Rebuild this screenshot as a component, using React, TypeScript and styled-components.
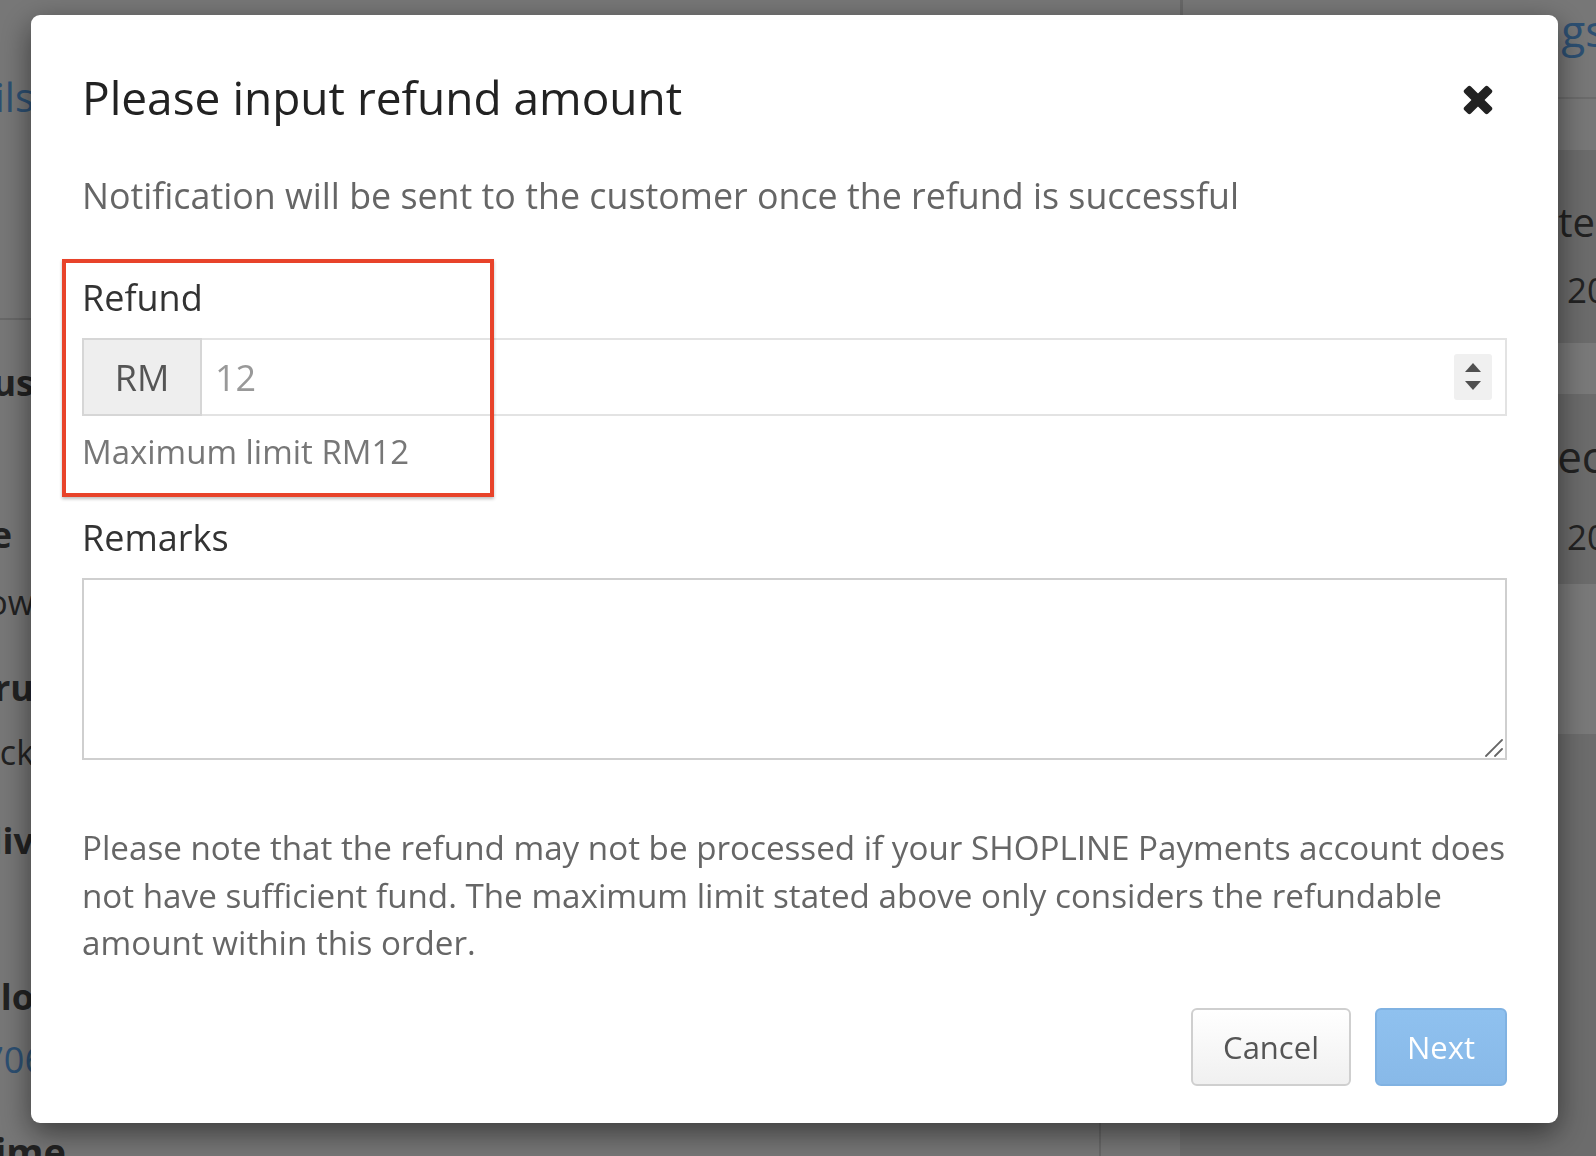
import React from 'react';
import styled, { createGlobalStyle } from 'styled-components';

const GlobalStyle = createGlobalStyle`
  html, body {
    margin: 0;
    padding: 0;
    background: #eeeeee;
  }
  body {
    font-family: 'Open Sans', 'Liberation Sans', sans-serif;
  }
  * {
    box-sizing: border-box;
  }
`;

const color = {
  pageBg: '#eeeeee',
  pageText: '#444',
  pageLink: '#5a9fe4',
  title: '#222',
  label: '#333',
  muted: '#666',
  hint: '#777',
  red: '#e8432a',
};

const leftRows = [
  { text: 'Order Details', gap: 0, size: 40, bold: false, link: true, shift: 0 },
  { text: 'Status', gap: 39, size: 36, bold: true, link: false, shift: 0, rule: true },
  { text: 'Type', gap: 104, size: 36, bold: true, link: false, shift: -22 },
  { text: 'Show', gap: 19, size: 34, bold: false, link: false, shift: 0 },
  { text: 'Thru', gap: 38, size: 36, bold: true, link: false, shift: 0 },
  { text: 'Track', gap: 16, size: 34, bold: false, link: false, shift: 0 },
  { text: 'Deliv', gap: 41, size: 36, bold: true, link: false, shift: 0 },
  { text: 'Hello', gap: 108, size: 36, bold: true, link: false, shift: 0 },
  { text: '0612706', gap: 15, size: 36, bold: false, link: true, shift: 11 },
  { text: 'Time', gap: 43, size: 38, bold: true, link: false, shift: 32 },
];

export default function App() {
  return (
    <>
      <GlobalStyle />
      <Page>
        <LeftPane>
          {leftRows.map(row => (
            <React.Fragment key={row.text}>
              {row.rule && <PageRule />}
              <PageLine $gap={row.gap} $size={row.size} $bold={row.bold} $link={row.link} $shift={row.shift}>
                {row.text}
              </PageLine>
            </React.Fragment>
          ))}
        </LeftPane>
        <CenterPane>
          <CenterFoot />
        </CenterPane>
        <RightPane>
          <RightHead>
            <PageLine $gap={0} $size={44} $bold={false} $link $shift={0}>
              Settings
            </PageLine>
          </RightHead>
          <InfoCard>
            <CardRow $indent={18} $tone="dark" $height={193}>
              <PageLine $gap={48} $size={40} $bold={false} $link={false} $shift={0}>
                Update
              </PageLine>
              <DateText $indent={109} $gap={22}>
                2019-06-12 10:20
              </DateText>
            </CardRow>
            <CardRow $indent={0} $tone="light" $height={51} />
            <CardRow $indent={90} $tone="dark" $height={190}>
              <PageLine $gap={38} $size={44} $bold={false} $link={false} $shift={0}>
                Received
              </PageLine>
              <DateText $indent={37} $gap={35}>
                2019-06-12 10:22
              </DateText>
            </CardRow>
            <CardRow $indent={0} $tone="light" $height={150} />
          </InfoCard>
          <CardFill />
        </RightPane>
      </Page>

      <Backdrop>
        <Modal>
          <Header>
            <Title>Please input refund amount</Title>
            <CloseButton type="button" aria-label="Close">
              <svg width="30" height="30" viewBox="0 0 30 30">
                <g fill="#222" transform="rotate(45 15 15)">
                  <rect x="-1.8" y="10.4" width="33.6" height="9.2" rx="2.2" />
                  <rect x="10.4" y="-1.8" width="9.2" height="33.6" rx="2.2" />
                </g>
              </svg>
            </CloseButton>
          </Header>

          <Notice>Notification will be sent to the customer once the refund is successful</Notice>

          <RefundGroup>
            <Highlight />
            <FieldLabel>Refund</FieldLabel>
            <InputGroup>
              <Addon>RM</Addon>
              <InputBox>
                <AmountInput placeholder="12" />
                <Spinner>
                  <svg width="18" height="32" viewBox="0 0 18 32">
                    <polygon points="9,2 17,11 1,11" fill="#505050" />
                    <polygon points="1,20 17,20 9,29" fill="#505050" />
                  </svg>
                </Spinner>
              </InputBox>
            </InputGroup>
            <HelpText>Maximum limit RM12</HelpText>
          </RefundGroup>

          <RemarksGroup>
            <FieldLabel>Remarks</FieldLabel>
            <RemarksBox>
              <Remarks />
              <Grip viewBox="0 0 18 18" aria-hidden>
                <line x1="1" y1="17" x2="17" y2="1" stroke="#666" strokeWidth="1.8" strokeLinecap="round" />
                <line x1="10" y1="17" x2="17" y2="10" stroke="#666" strokeWidth="1.8" strokeLinecap="round" />
              </Grip>
            </RemarksBox>
          </RemarksGroup>

          <Note>
            Please note that the refund may not be processed if your SHOPLINE Payments account does not have
            sufficient fund. The maximum limit stated above only considers the refundable amount within this
            order.
          </Note>

          <Footer>
            <Button type="button" $primary={false}>
              Cancel
            </Button>
            <Button type="button" $primary>
              Next
            </Button>
          </Footer>
        </Modal>
      </Backdrop>
    </>
  );
}

/* page behind the dialog */

const Page = styled.div`
  height: 1156px;
  overflow: hidden;
  background: ${color.pageBg};
  display: grid;
  grid-template-columns: 34px 1146px 1fr;
`;

const LeftPane = styled.div`
  display: flex;
  flex-direction: column;
  align-items: flex-end;
  padding-top: 73px;
  white-space: nowrap;
`;

const CenterPane = styled.div`
  display: flex;
  flex-direction: column;
  justify-content: flex-end;
`;

const CenterFoot = styled.div`
  width: 1067px;
  height: 60px;
  border-right: 2px solid #cfcfcf;
`;

const PageLine = styled.div<{ $gap: number; $size: number; $bold: boolean; $link: boolean; $shift: number }>`
  margin-top: ${p => p.$gap}px;
  margin-right: ${p => -p.$shift}px;
  font-size: ${p => p.$size}px;
  line-height: 48px;
  font-weight: ${p => (p.$bold ? 700 : 400)};
  color: ${p => (p.$link ? color.pageLink : color.pageText)};
  white-space: nowrap;
`;

const PageRule = styled.div`
  align-self: stretch;
  margin: 197px -200px 0 0;
  height: 2px;
  background: #d0d0d0;
`;

const RightPane = styled.div`
  display: flex;
  flex-direction: column;
`;

const RightHead = styled.div`
  height: 150px;
  padding: 6px 0 0 260px;
  border-left: 3px solid #cfcfcf;
  background: linear-gradient(#eeeeee 0 97px, #d6d6d6 97px 99px, #eeeeee 99px);
`;

const InfoCard = styled.div`
  display: flex;
  flex-direction: column;
`;

const CardRow = styled.div<{ $indent: number; $tone: 'dark' | 'light'; $height: number }>`
  height: ${p => p.$height}px;
  padding-left: ${p => 260 + p.$indent}px;
  background: ${p => (p.$tone === 'dark' ? '#d6d6d6' : '#f2f2f2')};
  display: flex;
  flex-direction: column;
`;

const CardFill = styled.div`
  flex: 1;
  background: #d9d9d9;
`;

const DateText = styled.div<{ $indent: number; $gap: number }>`
  margin: ${p => p.$gap}px 0 0 ${p => p.$indent}px;
  font-size: 35px;
  line-height: 44px;
  color: ${color.pageText};
  white-space: nowrap;
`;

/* dialog */

const Backdrop = styled.div`
  position: fixed;
  inset: 0;
  background: rgba(0, 0, 0, 0.5);
  padding: 15px 0 0 31px;
`;

const Modal = styled.div`
  width: 1527px;
  background: #fff;
  border-radius: 9px;
  box-shadow: 0 10px 30px rgba(0, 0, 0, 0.5);
  padding: 54px 51px 37px;
`;

const Header = styled.div`
  display: flex;
  align-items: center;
  justify-content: space-between;
`;

const Title = styled.h4`
  margin: 0;
  font-size: 46px;
  line-height: 56px;
  font-weight: 400;
  color: ${color.title};
`;

const CloseButton = styled.button`
  width: 30px;
  height: 30px;
  margin: 6px 14px 0 0;
  padding: 0;
  border: 0;
  background: none;
  display: flex;
`;

const Notice = styled.p`
  margin: 45px 0 0;
  font-size: 35.8px;
  line-height: 50px;
  color: ${color.muted};
`;

const RefundGroup = styled.div`
  position: relative;
  margin-top: 53px;
`;

const Highlight = styled.div`
  position: absolute;
  left: -20px;
  top: -14px;
  width: 432px;
  height: 238px;
  border: 4px solid ${color.red};
  box-shadow: 0 2px 3px rgba(0, 0, 0, 0.25);
  pointer-events: none;
  z-index: 1;
`;

const FieldLabel = styled.label`
  display: block;
  font-size: 36px;
  line-height: 50px;
  color: ${color.label};
`;

const InputGroup = styled.div`
  display: flex;
  height: 78px;
  margin-top: 15px;
`;

const Addon = styled.span`
  width: 120px;
  display: flex;
  align-items: center;
  justify-content: center;
  background: #eeeeee;
  border: 2px solid #d6d6d6;
  font-size: 36px;
  color: #555;
`;

const InputBox = styled.div`
  flex: 1;
  display: flex;
  align-items: center;
  border: 2px solid #e3e3e3;
  border-left: 0;
`;

const AmountInput = styled.input`
  flex: 1;
  height: 100%;
  border: 0;
  outline: none;
  padding: 0 0 0 13px;
  font-family: 'Open Sans', 'Liberation Sans', sans-serif;
  font-size: 36px;
  color: #555;
  background: transparent;
  &::placeholder {
    color: #999;
  }
`;

const Spinner = styled.span`
  width: 38px;
  height: 46px;
  margin-right: 13px;
  border-radius: 3px;
  background: #f0f0f0;
  display: flex;
  align-items: center;
  justify-content: center;
`;

const HelpText = styled.div`
  margin-top: 13px;
  font-size: 33px;
  line-height: 46px;
  color: ${color.hint};
`;

const RemarksGroup = styled.div`
  margin-top: 38px;
`;

const RemarksBox = styled.div`
  position: relative;
  margin-top: 15px;
`;

const Remarks = styled.textarea`
  display: block;
  width: 100%;
  height: 182px;
  border: 2px solid #cfcfcf;
  border-radius: 0;
  outline: none;
  resize: none;
  font-family: 'Open Sans', 'Liberation Sans', sans-serif;
  font-size: 34px;
`;

const Grip = styled.svg`
  position: absolute;
  right: 4px;
  bottom: 3px;
  width: 18px;
  height: 18px;
  pointer-events: none;
`;

const Note = styled.p`
  margin: 64px 0 0;
  font-size: 33.2px;
  line-height: 47.5px;
  color: ${color.muted};
`;

const Footer = styled.div`
  display: flex;
  justify-content: flex-end;
  gap: 24px;
  margin-top: 41px;
`;

const Button = styled.button<{ $primary: boolean }>`
  height: 78px;
  padding: 0 30px;
  border-radius: 6px;
  font-family: 'Open Sans', 'Liberation Sans', sans-serif;
  font-size: 31px;
  border: 2px solid ${p => (p.$primary ? '#80b2e2' : '#cfcfcf')};
  color: ${p => (p.$primary ? '#fff' : '#555')};
  background: ${p => (p.$primary ? 'linear-gradient(#8fc1ef, #88b9e8)' : 'linear-gradient(#ffffff, #f0f0f0)')};
`;
